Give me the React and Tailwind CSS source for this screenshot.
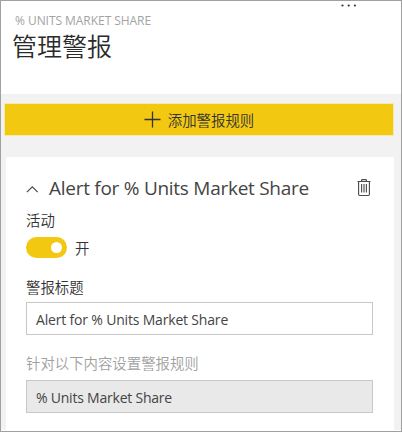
const latin = "font-['Open_Sans','Noto_Sans_CJK_SC',sans-serif]";
const cjk = "font-['Noto_Sans_CJK_SC',sans-serif]";

function Header() {
  return (
    <header className="relative flex h-[93px] flex-col bg-white pl-[10px]">
      <div className={`${latin} mt-[11px] h-[17px] pl-1 text-[12px] leading-[17px] tracking-[-0.05px] text-[#a3a3a3]`}>% UNITS MARKET SHARE</div>
      <h1 className={`${cjk} -mt-px ml-px h-[34px] text-[25px] leading-[34px] font-[350] text-[#2b2b2b]`}>管理警报</h1>
      <svg className="absolute top-[2px] right-[43px]" width="18" height="5" fill="#333">
        <circle cx="2.5" cy="2.5" r="1.1" />
        <circle cx="8.7" cy="2.5" r="1.1" />
        <circle cx="14.9" cy="2.5" r="1.1" />
      </svg>
    </header>
  );
}

function AddButton() {
  return (
    <button className="flex h-[33px] w-[390px] items-center justify-center gap-[7px] border border-[#f5e9b0] bg-[#f2c811] text-[#333]">
      <svg width="17" height="17" stroke="#333" strokeWidth="1.3">
        <path d="M8.5 0.5V16.5M0.5 8.5H16.5" />
      </svg>
      <span className={`${cjk} text-[14.4px] leading-5 font-[350] text-[#333]`}>添加警报规则</span>
    </button>
  );
}

function TrashIcon() {
  return (
    <svg className="mr-[3px]" width="14" height="18" fill="none" stroke="#4a4a4a" strokeWidth="1.1">
      <path d="M0.5 2.5H13.5M4.5 2.5V1.5Q4.5 0.6 5.4 0.6H8.6Q9.5 0.6 9.5 1.5V2.5M1.6 2.5V15.3Q1.6 16.5 2.8 16.5H11.2Q12.4 16.5 12.4 15.3V2.5M4.6 5V13.5M7 5V13.5M9.4 5V13.5" />
    </svg>
  );
}

export default function App() {
  return (
    <div className="flex h-[432px] w-[402px] flex-col overflow-hidden border border-[#a0a0a0] bg-white">
      <Header />
      <main className="flex h-[336px] flex-col bg-[#f2f2f2] pt-[9px] pl-[3px]">
        <AddButton />
        <section className="mt-[21px] ml-[2px] flex h-[273px] w-[388px] flex-col bg-white px-5">
          <div className="mt-[16px] flex h-[30px] items-center">
            <svg className="mt-[2px]" width="13" height="9" fill="none" stroke="#4a4a4a" strokeWidth="1.2">
              <path d="M0.9 7.2L6.3 1.8L11.7 7.2" />
            </svg>
            <h2 className={`${latin} ml-[10px] flex-1 text-[19px] leading-[30px] tracking-[-0.27px] whitespace-nowrap text-[#444]`}>Alert for % Units Market Share</h2>
            <TrashIcon />
          </div>
          <div className={`${cjk} mt-[7px] h-5 text-[14.4px] leading-5 font-[350] text-[#333]`}>活动</div>
          <div className="mt-[7px] flex h-[21px] items-center">
            <div className="flex h-[21px] w-[41px] items-center justify-end rounded-full bg-[#f2c811] pr-[5px]">
              <div className="size-[11px] rounded-full bg-white" />
            </div>
            <span className={`${cjk} ml-2 text-[14.4px] leading-5 font-[350] text-[#333]`}>开</span>
          </div>
          <div className={`${cjk} mt-[19px] h-5 text-[14.4px] leading-5 font-[350] text-[#333]`}>警报标题</div>
          <div className={`${latin} mt-[5px] flex h-[33px] w-[347px] items-center border border-[#c8c8c8] pt-[2px] pl-[9px] text-[14px] tracking-[-0.18px] text-[#444]`}>Alert for % Units Market Share</div>
          <div className={`${cjk} mt-[18px] h-5 text-[14.4px] leading-5 font-[350] text-[#a0a0a0]`}>针对以下内容设置警报规则</div>
          <div className={`${latin} mt-[7px] flex h-[33px] w-[347px] items-center border border-[#c8c8c8] bg-[#e9e9e9] pt-[2px] pl-[9px] text-[14px] tracking-[-0.22px] text-[#444]`}>% Units Market Share</div>
        </section>
      </main>
    </div>
  );
}
